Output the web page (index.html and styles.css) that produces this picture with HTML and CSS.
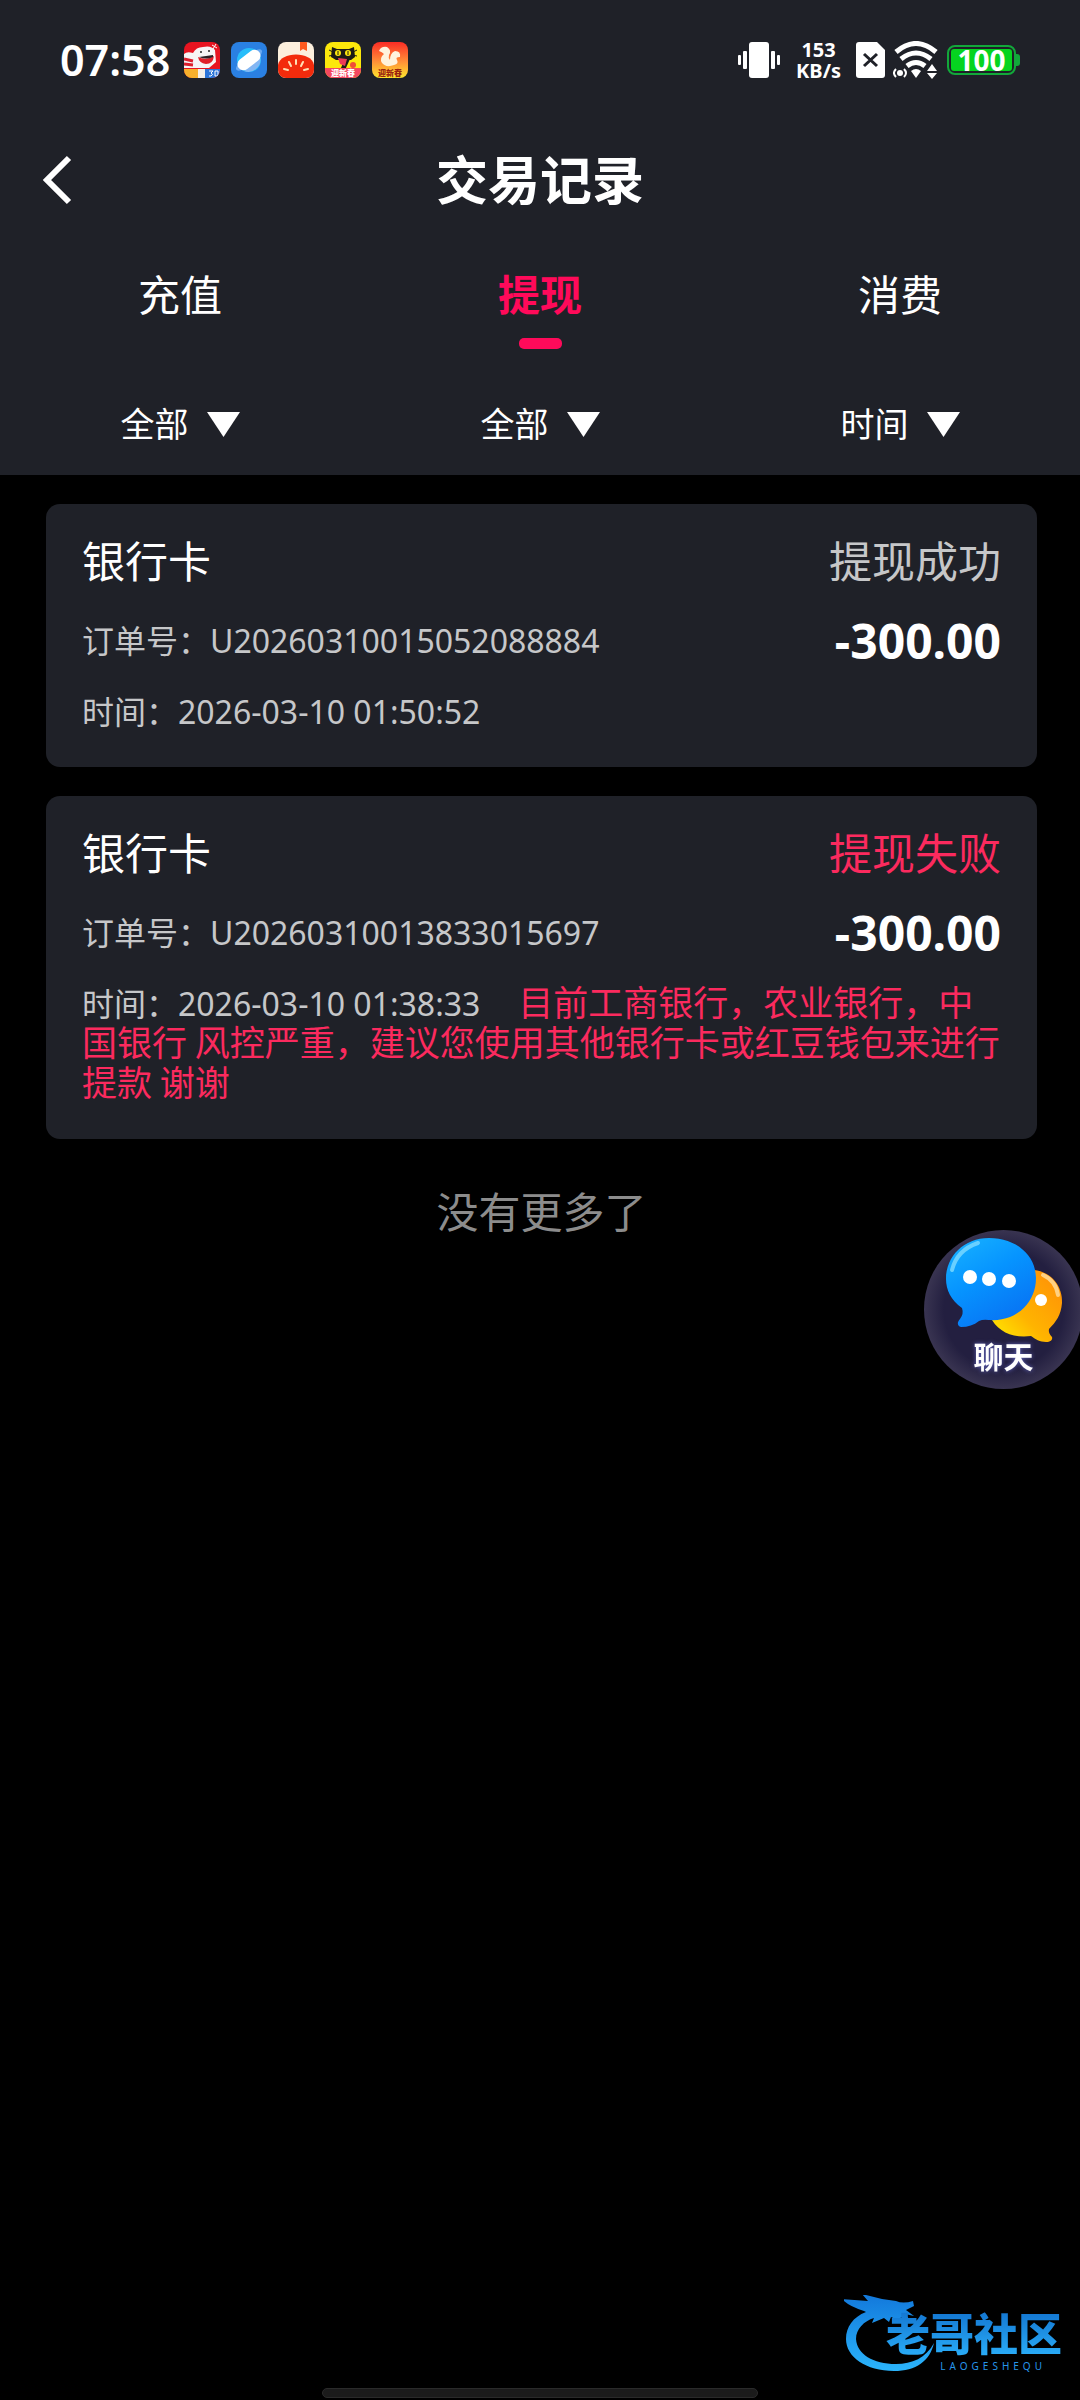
FILE: index.html
```html
<!DOCTYPE html>
<html lang="zh-CN">
<head>
    <meta charset="UTF-8">
    <meta name="viewport" content="width=device-width, initial-scale=1.0">
    <title>交易记录</title>
    <link rel="stylesheet" href="styles.css">
</head>
<body>
    <header class="top">
        <div class="status-bar">
            <span class="clock">07:58</span>
            <div class="app-icons">
                <svg class="app-icon" viewBox="0 0 36 36">
                    <rect width="36" height="36" fill="#e81420"/>
                    <path d="M0 12q3-3 9-1 3-6 10-6 8-2 12 3l1 12-7 6H0z" fill="#f6f4f4"/>
                    <path d="M0 17l9 2M0 22l9 1" stroke="#dc1f2b" stroke-width="3"/>
                    <path d="M14 15q8 4 16-1-1 8-8 8-7-1-8-7z" fill="#e02029"/>
                    <path d="M15 15q7 3 14 0v-2z" fill="#2a2024"/>
                    <circle cx="17" cy="10" r="1" fill="#222"/>
                    <circle cx="25" cy="9" r="1" fill="#222"/>
                    <path d="M28 3l5 3M32 2l-3 5" stroke="#fff" stroke-width="1"/>
                    <rect y="27" width="14" height="9" fill="#f7b02c"/>
                    <rect x="14" y="27" width="8" height="9" fill="#f4efe8"/>
                    <rect x="21" y="27" width="15" height="9" fill="#2c75d8"/>
                    <path d="M25 29h4l-2 2q3 1 0 3h-2M31 29v5h3v-5z" stroke="#fff" fill="none"/>
                </svg>
                <svg class="app-icon" viewBox="0 0 36 36">
                    <rect width="36" height="36" fill="#2a80e2"/>
                    <circle cx="18" cy="18" r="12" fill="#27bdfa"/>
                    <path d="M29 15a12 12 0 0 1-16 14z" fill="#83b6f3"/>
                    <ellipse cx="18" cy="18" rx="16" ry="5" transform="rotate(-38 18 18)" fill="#6baaf2"/>
                    <rect x="5" y="12" width="26" height="12" rx="6" transform="rotate(-38 18 18)" fill="#fff"/>
                </svg>
                <svg class="app-icon" viewBox="0 0 36 36">
                    <rect width="36" height="36" fill="#fcefdd"/>
                    <path d="M22 0h7v9l-4-2-3 2z" fill="#ff5a1d"/>
                    <path d="M0 23C2 9 34 9 36 23v13H0z" fill="#f32b0c"/>
                    <path d="M18 18v4M11 20l2 4M25 20l-2 4M6 27l4 1M30 27l-4 1" stroke="#ffe0b5" stroke-width="2" stroke-linecap="round"/>
                </svg>
                <svg class="app-icon" viewBox="0 0 36 36">
                    <rect width="36" height="36" fill="#fce80b"/>
                    <path d="M7 5l5 2h12l5-2 1 10-4 3H11l-5-3z" fill="#1c1b16"/>
                    <path d="M4 8l6 3M4 14l5-1M32 8l-6 3M32 14l-5-1" stroke="#1c1b16"/>
                    <circle cx="13" cy="11" r="3" fill="#fce80b"/>
                    <circle cx="23" cy="11" r="3" fill="#fce80b"/>
                    <path d="M13 9v4M23 9v4" stroke="#1c1b16"/>
                    <path d="M20 17h5l-5 11h-5z" fill="#1c1b16"/>
                    <path d="M13 16l9 1-2 7-5-2z" fill="#ed3b55"/>
                    <circle cx="28" cy="23" r="3" fill="#f04c36"/>
                    <rect y="26" width="36" height="10" fill="#f4485f"/>
                    <text class="app-text" x="18" y="34" fill="#fff">迎新春</text>
                </svg>
                <svg class="app-icon" viewBox="0 0 36 36">
                    <defs>
                        <linearGradient id="uc" x2="0" y2="1">
                            <stop offset="0" stop-color="#fb2c25"/>
                            <stop offset=".55" stop-color="#ff9038"/>
                            <stop offset="1" stop-color="#ffe62d"/>
                        </linearGradient>
                    </defs>
                    <rect width="36" height="36" fill="url(#uc)"/>
                    <path d="M7 9q2-5 8-4 5 3 2 8-1 3 1 5 0-7 5-9 6 0 5 6-5 0-3 3 2 4-3 5-8 3-12-2-3-5 2-9-2-2-5-3z" fill="#fff3dd"/>
                    <text class="app-text" x="18" y="34" fill="#9b2410">迎新春</text>
                </svg>
            </div>
            <div class="status-right">
                <svg width="42" height="36" viewBox="0 0 42 36" fill="#fff">
                    <rect x="11" width="20" height="36" rx="3"/>
                    <rect y="13" width="3" height="10" rx="1"/>
                    <rect x="5" y="9" width="4" height="18" rx="1"/>
                    <rect x="33" y="9" width="4" height="18" rx="1"/>
                    <rect x="39" y="13" width="3" height="10" rx="1"/>
                </svg>
                <span class="speed">153<br>KB/s</span>
                <svg width="29" height="36" viewBox="0 0 29 36">
                    <path d="M3 0h18l8 8v25q0 3-3 3H3q-3 0-3-3V3q0-3 3-3z" fill="#fff"/>
                    <path d="M8 12l13 12M21 12L8 24" stroke="#1f2128" stroke-width="3"/>
                </svg>
                <svg class="wifi" width="46" height="38" viewBox="0 0 46 38" fill="none" stroke="#fff">
                    <path d="M3 11Q23-6 43 11M8 18q15-12 30 0M14 25q9-7 18 0" stroke-width="5"/>
                    <path d="M18 30q5-4 10 0l-5 7z" fill="#fff" stroke="none"/>
                    <circle cx="7" cy="32" r="3" fill="#fff" stroke="none"/>
                    <path d="M3 28q-4 4 0 8M11 28q4 4 0 8" stroke-width="2"/>
                    <path d="M34 30l5-7 5 7zM34 32h10l-5 6z" fill="#fff" stroke="none"/>
                </svg>
                <div class="battery"><span>100</span></div>
            </div>
        </div>

        <div class="title-bar">
            <button class="back" type="button" aria-label="返回">
                <svg width="32" height="50" viewBox="0 0 32 50" fill="none" stroke="#fff" stroke-width="6">
                    <path d="M28 3L6 25l22 22"/>
                </svg>
            </button>
            <h1>交易记录</h1>
        </div>

        <nav class="tabs">
            <button class="tab" type="button">充值</button>
            <button class="tab active" type="button">提现</button>
            <button class="tab" type="button">消费</button>
        </nav>

        <div class="filters">
            <div class="filter">
                <select aria-label="类型"><option>全部</option></select>
                <svg width="33" height="25" viewBox="0 0 33 25"><path d="M0 0h33L16.500 25z" fill="#fff"/></svg>
            </div>
            <div class="filter">
                <select aria-label="状态"><option>全部</option></select>
                <svg width="33" height="25" viewBox="0 0 33 25"><path d="M0 0h33L16.500 25z" fill="#fff"/></svg>
            </div>
            <div class="filter">
                <select aria-label="时间"><option>时间</option></select>
                <svg width="33" height="25" viewBox="0 0 33 25"><path d="M0 0h33L16.500 25z" fill="#fff"/></svg>
            </div>
        </div>
    </header>

    <main class="records">
        <article class="card">
            <div class="row">
                <h2>银行卡</h2>
                <span class="state">提现成功</span>
            </div>
            <div class="row">
                <span class="order">订单号：U20260310015052088884</span>
                <strong class="amount">-300.00</strong>
            </div>
            <p class="detail">时间：2026-03-10 01:50:52</p>
        </article>

        <article class="card">
            <div class="row">
                <h2>银行卡</h2>
                <span class="state failed">提现失败</span>
            </div>
            <div class="row">
                <span class="order">订单号：U20260310013833015697</span>
                <strong class="amount">-300.00</strong>
            </div>
            <p class="detail">时间：2026-03-10 01:38:33<span class="note">目前工商银行，农业银行，中国银行 风控严重，建议您使用其他银行卡或红豆钱包来进行提款 谢谢</span></p>
        </article>

        <p class="no-more">没有更多了</p>
    </main>

    <button class="chat" type="button">
        <svg width="159" height="159" viewBox="0 0 159 159">
            <defs>
                <radialGradient id="disc">
                    <stop offset=".75" stop-color="#231f40"/>
                    <stop offset="1" stop-color="#393451"/>
                </radialGradient>
                <linearGradient id="blue" x2=".6" y2="1">
                    <stop offset="0" stop-color="#19b4ff"/>
                    <stop offset=".5" stop-color="#0694ff"/>
                    <stop offset="1" stop-color="#0874f4"/>
                </linearGradient>
                <linearGradient id="gold" x1="1" x2="0" y2="1">
                    <stop offset="0" stop-color="#ff8c08"/>
                    <stop offset=".6" stop-color="#ffb400"/>
                    <stop offset="1" stop-color="#fff000"/>
                </linearGradient>
            </defs>
            <circle cx="79.500" cy="79.500" r="79.500" fill="url(#disc)"/>
            <path d="M110 40c18 2 29 17 28 33-1 12-6 19-13 26q-1 4 3 8c1 3-2 5-6 5-6 0-11-3-15-6-17 2-31-3-39-16z" fill="url(#gold)"/>
            <path d="M119 45q13 6 15 20" stroke="#ffd183" stroke-width="4" stroke-linecap="round" fill="none"/>
            <circle cx="117" cy="70" r="6" fill="#fff"/>
            <path d="M65 8c27 0 47 17 47 40 0 25-20 44-47 42q-6-1-10 1c-5 4-11 6-18 6-4-1-4-5-1-8q4-5 2-11C27 70 22 60 22 49 22 26 40 8 65 8z" fill="url(#blue)"/>
            <path d="M28 40q5-20 26-27" stroke="#69d0ff" stroke-width="4" stroke-linecap="round" fill="none"/>
            <g fill="#fff">
                <circle cx="46" cy="47" r="7"/>
                <circle cx="65" cy="49" r="7"/>
                <circle cx="85" cy="51" r="7"/>
            </g>
        </svg>
        <span>聊天</span>
    </button>

    <div class="brand">
        <svg class="dragon" width="92" height="78" viewBox="0 0 92 78">
            <defs>
                <linearGradient id="sky" x2="0" y2="1">
                    <stop offset="0" stop-color="#1278db"/>
                    <stop offset="1" stop-color="#2bb4fb"/>
                </linearGradient>
            </defs>
            <path d="M22 17C9 22 2 32 2 44c0 18 20 32 48 32 22 0 36-10 40-28-8 15-22 21-38 21-23 0-39-10-40-25 0-10 8-18 18-21l-2 5 12-5 5 4 2-5 9 4 1-4 8 2-4-5 9 2-8-6 8-4-1-5q-10 3-17 0l-14-2-20-5 6 7-26-2q6 7 22 12z" fill="url(#sky)"/>
        </svg>
        <div class="brand-words">
            <span class="brand-name">老哥社区</span>
            <span class="brand-latin">LAOGESHEQU</span>
        </div>
    </div>
    <div class="home-bar"></div>
</body>
</html>
```

FILE: styles.css
```css
* {
    box-sizing: border-box;
}

body {
    margin: 0;
    min-height: 100vh;
    display: flex;
    flex-direction: column;
    background: #000;
    color: #fff;
    font-family: "Noto Sans", "Noto Sans CJK SC", sans-serif;
}

button,
select {
    padding: 0;
    border: none;
    background: none;
    color: inherit;
    font-family: inherit;
    cursor: pointer;
}

svg {
    display: block;
    flex: none;
}

h1,
h2,
p {
    margin: 0;
}

.top {
    background: #1f2128;
}

/* status bar */
.status-bar {
    display: flex;
    align-items: center;
    height: 120px;
    padding: 0 60px;
}

.clock {
    font-size: 43px;
    font-weight: 600;
    line-height: 60px;
}

.app-icons {
    display: flex;
    gap: 11px;
    margin-left: 14px;
}

.app-icon {
    width: 36px;
    height: 36px;
    border-radius: 8px;
}

.app-text {
    font-size: 8px;
    font-weight: 900;
    text-anchor: middle;
}

.status-right {
    display: flex;
    align-items: center;
    margin-left: auto;
}

.speed {
    margin: 0 15px 0 16px;
    font-size: 20px;
    font-weight: 700;
    line-height: 21px;
    text-align: center;
}

.wifi {
    margin: 0 8px;
}

.battery {
    position: relative;
    width: 69px;
    height: 30px;
    margin-right: 4px;
    padding: 2px;
    border: 2px solid #12a83a;
    border-radius: 8px;
}

.battery span {
    display: block;
    height: 22px;
    border-radius: 3px;
    background: #06d420;
    font-size: 28px;
    font-weight: 700;
    line-height: 22px;
    text-align: center;
}

.battery::after {
    content: "";
    position: absolute;
    top: 7px;
    right: -6px;
    width: 4px;
    height: 12px;
    border-radius: 0 3px 3px 0;
    background: #12a83a;
}

/* title */
.title-bar {
    display: grid;
    grid-template-columns: 120px 1fr 120px;
    align-items: center;
    height: 120px;
}

.back {
    padding-left: 41px;
}

.title-bar h1 {
    font-size: 52px;
    font-weight: 700;
    line-height: 60px;
    text-align: center;
}

/* tabs and filters */
.tabs,
.filters {
    display: grid;
    grid-template-columns: repeat(3, 1fr);
}

.tab {
    display: flex;
    flex-direction: column;
    align-items: center;
    gap: 13px;
    padding: 25px 0 24px;
    font-size: 42px;
    line-height: 60px;
}

.tab::after {
    content: "";
    width: 43px;
    height: 11px;
    border-radius: 5px;
}

.tab.active {
    color: #ff0a5a;
    font-weight: 700;
}

.tab.active::after {
    background: #ff0a5a;
}

.filter {
    display: flex;
    align-items: center;
    justify-content: center;
    gap: 18px;
    height: 102px;
}

.filter select {
    appearance: none;
    font-size: 34px;
    line-height: 60px;
}

/* records */
.records {
    flex: 1;
    padding: 29px 43px 0 46px;
}

.card {
    margin-bottom: 29px;
    padding: 28px 36px 35px;
    border-radius: 14px;
    background: #1f2128;
}

.row {
    display: flex;
    justify-content: space-between;
    line-height: 60px;
}

.row + .row {
    margin-top: 19px;
}

.card h2,
.state {
    font-size: 43px;
    font-weight: 400;
}

.state {
    color: #c6c7c9;
}

.state.failed {
    color: #fb2a5e;
}

.order,
.detail {
    color: #c6c7c9;
    font-size: 32px;
}

.amount {
    font-size: 48px;
    font-weight: 700;
}

.detail {
    margin-top: 21px;
    line-height: 40px;
}

.note {
    margin-left: 38px;
    color: #fb2a5e;
    font-family: "Noto Sans CJK SC", sans-serif;
    font-size: 35px;
    line-height: 30px;
}

.no-more {
    margin-top: 43px;
    color: #8c8c8c;
    font-size: 42px;
    line-height: 60px;
    text-align: center;
}

/* floating chat entry */
.chat {
    position: fixed;
    top: 1230px;
    right: -3px;
}

.chat span {
    position: absolute;
    right: 0;
    bottom: 12px;
    left: 0;
    font-size: 30px;
    font-weight: 700;
    line-height: 40px;
    text-shadow: 0 0 4px #5f62b8;
}

/* site mark and home indicator */
.brand {
    display: flex;
    align-items: flex-end;
    justify-content: flex-end;
    padding: 0 18px 15px 0;
}

.dragon {
    margin-right: -50px;
}

.brand-words {
    display: flex;
    flex-direction: column;
    align-items: flex-end;
    color: #2796ea;
}

.brand-name {
    background: linear-gradient(#1273cf, #2bb0fa);
    background-clip: text;
    -webkit-background-clip: text;
    color: transparent;
    font-size: 44px;
    font-weight: 900;
    line-height: 50px;
}

.brand-latin {
    margin-right: 16px;
    font-size: 10px;
    letter-spacing: 4px;
    line-height: 14px;
}

.home-bar {
    width: 436px;
    height: 10px;
    margin: 0 auto 2px;
    border: 1px solid #2a2a2a;
    border-radius: 5px;
    background: #1b1b1b;
}
```
